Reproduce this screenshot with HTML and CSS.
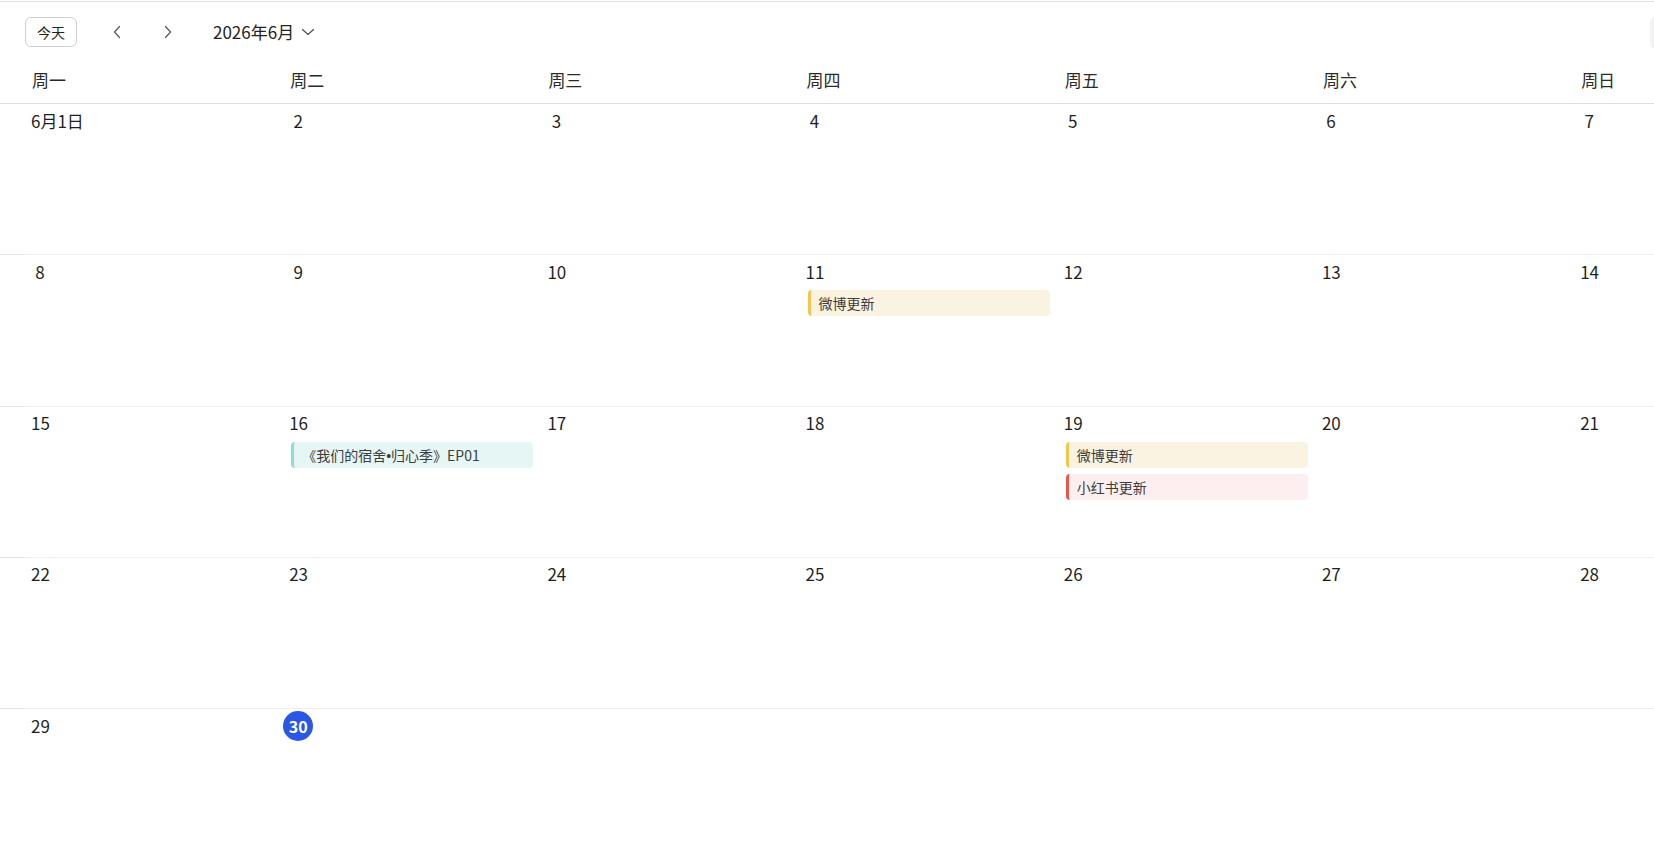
FILE: index.html
```html
<!DOCTYPE html>
<html lang="zh-CN">
<head>
<meta charset="utf-8">
<title>日历</title>
<link rel="stylesheet" href="styles.css">
</head>
<body>
<div class="app">
  <div class="toolbar">
    <button class="today-btn">今天</button>
    <button class="nav-btn prev" aria-label="上个月">
      <svg width="10" height="14" viewBox="0 0 10 14"><path d="M7.5 1.5 L2.5 7 L7.5 12.5" fill="none" stroke="#555" stroke-width="1.2" stroke-linecap="round" stroke-linejoin="round"/></svg>
    </button>
    <button class="nav-btn next" aria-label="下个月">
      <svg width="10" height="14" viewBox="0 0 10 14"><path d="M2.5 1.5 L7.5 7 L2.5 12.5" fill="none" stroke="#555" stroke-width="1.2" stroke-linecap="round" stroke-linejoin="round"/></svg>
    </button>
    <div class="month-title">2026年6月
      <svg class="caret" width="14" height="8" viewBox="0 0 14 8"><path d="M1.5 1.5 L7 6.5 L12.5 1.5" fill="none" stroke="#555" stroke-width="1.3" stroke-linecap="round" stroke-linejoin="round"/></svg>
    </div>
    <div class="right-tools"></div>
  </div>

  <div class="weekdays">
    <div class="wd">周一</div><div class="wd">周二</div><div class="wd">周三</div><div class="wd">周四</div><div class="wd">周五</div><div class="wd">周六</div><div class="wd">周日</div>
  </div>

  <div class="month">
    <div class="week first">
      <div class="cell"><span class="day">6月1日</span></div>
      <div class="cell"><span class="day">2</span></div>
      <div class="cell"><span class="day">3</span></div>
      <div class="cell"><span class="day">4</span></div>
      <div class="cell"><span class="day">5</span></div>
      <div class="cell"><span class="day">6</span></div>
      <div class="cell"><span class="day">7</span></div>
    </div>
    <div class="week">
      <div class="cell"><span class="day">8</span></div>
      <div class="cell"><span class="day">9</span></div>
      <div class="cell"><span class="day">10</span></div>
      <div class="cell"><span class="day">11</span>
        <div class="event yellow">微博更新</div>
      </div>
      <div class="cell"><span class="day">12</span></div>
      <div class="cell"><span class="day">13</span></div>
      <div class="cell"><span class="day">14</span></div>
    </div>
    <div class="week">
      <div class="cell"><span class="day">15</span></div>
      <div class="cell"><span class="day">16</span>
        <div class="event teal">《我们的宿舍<span class="dot">•</span>归心季》EP01</div>
      </div>
      <div class="cell"><span class="day">17</span></div>
      <div class="cell"><span class="day">18</span></div>
      <div class="cell"><span class="day">19</span>
        <div class="event yellow">微博更新</div>
        <div class="event red">小红书更新</div>
      </div>
      <div class="cell"><span class="day">20</span></div>
      <div class="cell"><span class="day">21</span></div>
    </div>
    <div class="week">
      <div class="cell"><span class="day">22</span></div>
      <div class="cell"><span class="day">23</span></div>
      <div class="cell"><span class="day">24</span></div>
      <div class="cell"><span class="day">25</span></div>
      <div class="cell"><span class="day">26</span></div>
      <div class="cell"><span class="day">27</span></div>
      <div class="cell"><span class="day">28</span></div>
    </div>
    <div class="week">
      <div class="cell"><span class="day">29</span></div>
      <div class="cell"><span class="day today">30</span></div>
      <div class="cell"></div>
      <div class="cell"></div>
      <div class="cell"></div>
      <div class="cell"></div>
      <div class="cell"></div>
    </div>
  </div>
</div>
</body>
</html>
```

FILE: styles.css
```css
* { box-sizing: border-box; }

html, body {
  margin: 0;
  padding: 0;
  background: #ffffff;
  overflow: hidden;
}

body {
  font-family: "Noto Sans CJK SC", "Noto Sans", sans-serif;
  color: #1f1f1f;
}

.app {
  margin-top: 1px;
  border-top: 1px solid #e2e2e2;
  width: 1832px;
}

.toolbar {
  width: 1730px;
  height: 60px;
  display: flex;
  align-items: center;
  padding-left: 25px;
}

.today-btn {
  width: 52px;
  height: 30px;
  border: 1px solid #cfcfcf;
  border-radius: 6px;
  background: #fff;
  font-family: inherit;
  font-size: 14px;
  color: #222;
  padding: 0;
  margin-right: 24px;
  cursor: pointer;
}

.nav-btn {
  width: 32px;
  height: 30px;
  border: none;
  background: transparent;
  display: flex;
  align-items: center;
  justify-content: center;
  padding: 0;
  cursor: pointer;
}

.nav-btn.prev { margin-right: 19px; }
.nav-btn.next { margin-right: 29px; }

.month-title {
  display: flex;
  align-items: center;
  font-size: 17px;
  color: #222;
  line-height: 1;
  margin-bottom: 2px;
}

.caret { margin-left: 7px; margin-top: 2px; }

.right-tools {
  margin-left: auto;
  width: 80px;
  height: 32px;
  border-radius: 6px;
  background: #f2f2f2;
  margin-top: 2px;
}

.weekdays {
  height: 41px;
  display: grid;
  grid-template-columns: repeat(7, 258.2px);
  padding-left: 25px;
  align-items: center;
}

.wd {
  padding-left: 7px;
  font-size: 17px;
  color: #2a2a2a;
  line-height: 1;
  padding-bottom: 7px;
}

.week {
  position: relative;
  height: 151.25px;
  border-top: 1px solid #efeff1;
  padding-left: 25px;
  display: grid;
  grid-template-columns: repeat(7, 258.2px);
}

.week::before {
  content: "";
  position: absolute;
  left: 0;
  top: -1px;
  width: 25px;
  height: 1px;
  background: #e3e3e6;
}

.week.first { border-top-color: #e0e0e0; }
.week.first::before { background: #e0e0e0; }

.cell {
  padding-top: 2px;
  display: flex;
  flex-direction: column;
  align-items: flex-start;
}

.day {
  height: 30px;
  min-width: 30px;
  padding: 0 6px 2px;
  display: inline-flex;
  align-items: center;
  justify-content: center;
  font-size: 17px;
  color: #1f1f1f;
  border-radius: 15px;
}

.day.today {
  background: #2b57e6;
  color: #fff;
  font-weight: 600;
  font-size: 16px;
  padding: 0 0 1px;
}

.event {
  align-self: stretch;
  margin: 3px 8px 3px 8px;
  height: 26px;
  line-height: 26px;
  padding-left: 8px;
  border-left: 3px solid;
  border-radius: 4px;
  font-size: 14px;
  color: #3c3c3c;
  white-space: nowrap;
  overflow: hidden;
}

.event + .event { margin-top: 3px; }

.dot {
  font-family: "Liberation Sans", sans-serif;
}

.event.yellow { background: #faf3e2; border-left-color: #f5c64b; }
.event.teal { background: #e6f6f4; border-left-color: #8edfd1; }
.event.red { background: #fdefef; border-left-color: #e4584f; }
```
